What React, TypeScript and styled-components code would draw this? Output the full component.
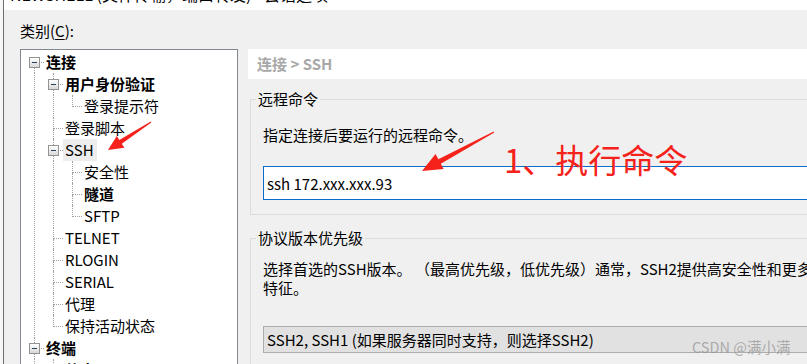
import styled, { createGlobalStyle } from 'styled-components';

const GlobalStyle = createGlobalStyle`
  html, body {
    margin: 0;
    padding: 0;
  }
  body {
    background: #f7f7f7;
    font-family: "Noto Sans CJK SC", "Microsoft YaHei", sans-serif;
    font-size: 15px;
    color: #000;
  }
`;

const Window = styled.div`
  position: relative;
  width: 807px;
  height: 364px;
  padding-left: 3px;
  box-sizing: border-box;
  overflow: hidden;
`;

const Frame = styled.div`
  height: 364px;
  border-left: 1px solid #6e6e6e;
  background: #f0f0f0;
  display: flex;
  flex-direction: column;
  overflow: hidden;
`;

const TitleBar = styled.div`
  height: 10px;
  flex: none;
  background: #fff;
  overflow: hidden;
  padding-left: 6px;
`;

const TitleText = styled.div`
  margin-top: -17px;
  line-height: 22px;
  font-size: 16px;
  white-space: nowrap;
`;

const Content = styled.div`
  flex: 1;
  padding-left: 16px;
  display: flex;
  flex-direction: column;
`;

const CategoryLabel = styled.div`
  height: 39px;
  box-sizing: border-box;
  padding-top: 11px;
  line-height: 20px;

  u {
    text-decoration-thickness: 1px;
    text-underline-offset: 2px;
  }
`;

const Main = styled.div`
  display: flex;
  align-items: flex-start;
`;

const TreeBox = styled.div`
  width: 218px;
  height: 330px;
  flex: none;
  box-sizing: border-box;
  background: #fff;
  border: 1px solid #828790;
  padding: 1px 0 0 4px;
`;

const Row = styled.div`
  height: 22px;
  display: flex;
`;

const GuideCell = styled.div<{ $line: boolean }>`
  width: 19px;
  flex: none;
  background-image: ${(p) =>
    p.$line ? 'repeating-linear-gradient(to bottom, #a0a0a0 0 1px, transparent 1px 2px)' : 'none'};
  background-size: 1px 100%;
  background-position: 9px 0;
  background-repeat: no-repeat;
`;

const ConnectorCell = styled.div`
  position: relative;
  width: 19px;
  flex: none;
  display: flex;
  flex-direction: column;
`;

const TopHalf = styled.div<{ $line: boolean }>`
  height: 12px;
  box-sizing: border-box;
  margin-left: 9px;
  border-left: 1px dotted ${(p) => (p.$line ? '#a0a0a0' : 'transparent')};
  border-bottom: 1px dotted #a0a0a0;
`;

const BottomHalf = styled.div<{ $line: boolean }>`
  height: 10px;
  margin-left: 9px;
  border-left: 1px dotted ${(p) => (p.$line ? '#a0a0a0' : 'transparent')};
`;

const Expander = styled.span`
  position: absolute;
  left: 4px;
  top: 6px;
  width: 9px;
  height: 9px;
  border: 1px solid #939393;
  background: linear-gradient(#ffffff, #d8d8d8);
  display: flex;
  align-items: center;
  justify-content: center;

  &::after {
    content: '';
    width: 5px;
    height: 1px;
    background: #27405e;
  }
`;

const NodeLabel = styled.span<{ $bold?: boolean; $selected?: boolean }>`
  padding: 0 3px 0 2px;
  line-height: 22px;
  white-space: nowrap;
  font-weight: ${(p) => (p.$bold ? 700 : 400)};
  background: ${(p) => (p.$selected ? '#ededed' : 'transparent')};
`;

const RightPane = styled.div`
  margin-left: 10px;
  width: 620px;
  flex: none;
`;

const Breadcrumb = styled.div`
  height: 30px;
  background: #fff;
  padding-left: 9px;
  line-height: 30px;
  color: #a8a8a8;
  font-weight: 700;
`;

const Group = styled.fieldset<{ $top: number }>`
  margin: ${(p) => p.$top}px 0 0 2px;
  padding: 0 0 14px 12px;
  border: 1px solid #dcdcdc;
  min-width: 0;
`;

const GroupTitle = styled.legend`
  padding: 0 2px;
  margin-left: -7px;
  line-height: 20px;
`;

const Description = styled.div<{ $top: number }>`
  margin-top: ${(p) => p.$top}px;
  line-height: 19px;
  white-space: nowrap;
`;

const CommandInput = styled.input`
  display: block;
  margin-top: 22px;
  width: 600px;
  height: 34px;
  box-sizing: border-box;
  border: 1px solid #0a6cc9;
  background: #fff;
  padding: 0 0 0 3px;
  font: inherit;
  font-size: 15px;
  color: #000;
  outline: none;
`;

const VersionSelect = styled.div`
  margin-top: 29px;
  width: 600px;
  height: 27px;
  box-sizing: border-box;
  border: 1px solid #adadad;
  background: #e1e1e1;
  padding-left: 3px;
  line-height: 25px;
  white-space: nowrap;
`;

const Overlay = styled.svg`
  position: absolute;
  left: 0;
  top: 0;
  pointer-events: none;
`;

const Annotation = styled.div`
  position: absolute;
  left: 504px;
  top: 141px;
  font-size: 33px;
  line-height: 36px;
  color: #f5221b;
  white-space: nowrap;
`;

const Watermark = styled.div`
  position: absolute;
  left: 692px;
  top: 336px;
  font-size: 14.5px;
  line-height: 22px;
  color: rgba(150, 150, 150, 0.75);
  white-space: nowrap;
`;

type Node = {
  label: string;
  guides: boolean[];
  bold?: boolean;
  expander?: boolean;
  selected?: boolean;
  first?: boolean;
  last?: boolean;
};

const nodes: Node[] = [
  { label: '连接', guides: [], bold: true, expander: true, first: true },
  { label: '用户身份验证', guides: [true], bold: true, expander: true },
  { label: '登录提示符', guides: [true, true], last: true },
  { label: '登录脚本', guides: [true] },
  { label: 'SSH', guides: [true], expander: true, selected: true },
  { label: '安全性', guides: [true, true] },
  { label: '隧道', guides: [true, true], bold: true },
  { label: 'SFTP', guides: [true, true], last: true },
  { label: 'TELNET', guides: [true] },
  { label: 'RLOGIN', guides: [true] },
  { label: 'SERIAL', guides: [true] },
  { label: '代理', guides: [true] },
  { label: '保持活动状态', guides: [true], last: true },
  { label: '终端', guides: [], bold: true, expander: true },
  { label: '仿真', guides: [true], bold: true, expander: true },
];

function arrowPoints(x1: number, y1: number, x2: number, y2: number, head: number, half: number, shaft: number) {
  const len = Math.hypot(x2 - x1, y2 - y1);
  const ux = (x2 - x1) / len;
  const uy = (y2 - y1) / len;
  const nx = -uy;
  const ny = ux;
  const bx = x2 - ux * head;
  const by = y2 - uy * head;
  const pts = [
    [x1 + nx * 0.6, y1 + ny * 0.6],
    [bx + (nx * shaft) / 2, by + (ny * shaft) / 2],
    [bx + nx * half, by + ny * half],
    [x2, y2],
    [bx - nx * half, by - ny * half],
    [bx - (nx * shaft) / 2, by - (ny * shaft) / 2],
    [x1 - nx * 0.6, y1 - ny * 0.6],
  ];
  return pts.map(([x, y]) => `${x.toFixed(1)},${y.toFixed(1)}`).join(' ');
}

export default function App() {
  return (
    <Window>
      <GlobalStyle />
      <Frame>
        <TitleBar>
          <TitleText>NEWSHELL (文件传输，端口转发) - 会话选项</TitleText>
        </TitleBar>
        <Content>
          <CategoryLabel>
            类别(<u>C</u>):
          </CategoryLabel>
          <Main>
            <TreeBox>
              {nodes.map((n, i) => (
                <Row key={i}>
                  {n.guides.map((g, j) => (
                    <GuideCell key={j} $line={g} />
                  ))}
                  <ConnectorCell>
                    <TopHalf $line={!n.first} />
                    <BottomHalf $line={!n.last} />
                    {n.expander && <Expander />}
                  </ConnectorCell>
                  <NodeLabel $bold={n.bold} $selected={n.selected}>
                    {n.label}
                  </NodeLabel>
                </Row>
              ))}
            </TreeBox>
            <RightPane>
              <Breadcrumb>连接 &gt; SSH</Breadcrumb>
              <Group $top={10}>
                <GroupTitle>远程命令</GroupTitle>
                <Description $top={16}>指定连接后要运行的远程命令。</Description>
                <CommandInput defaultValue="ssh 172.xxx.xxx.93" readOnly />
              </Group>
              <Group $top={13}>
                <GroupTitle>协议版本优先级</GroupTitle>
                <Description $top={11}>
                  选择首选的SSH版本。 （最高优先级，低优先级）通常，SSH2提供高安全性和更多
                  <br />
                  特征。
                </Description>
                <VersionSelect>SSH2, SSH1 (如果服务器同时支持，则选择SSH2)</VersionSelect>
              </Group>
            </RightPane>
          </Main>
        </Content>
      </Frame>
      <Overlay width={807} height={364}>
        <polygon points={arrowPoints(151, 122, 108, 150, 15, 7, 4.5)} fill="#f5221b" />
        <polygon points={arrowPoints(494, 132, 422, 171, 20, 8.5, 5)} fill="#f5221b" />
      </Overlay>
      <Annotation>1、执行命令</Annotation>
      <Watermark>CSDN @满小满</Watermark>
    </Window>
  );
}
